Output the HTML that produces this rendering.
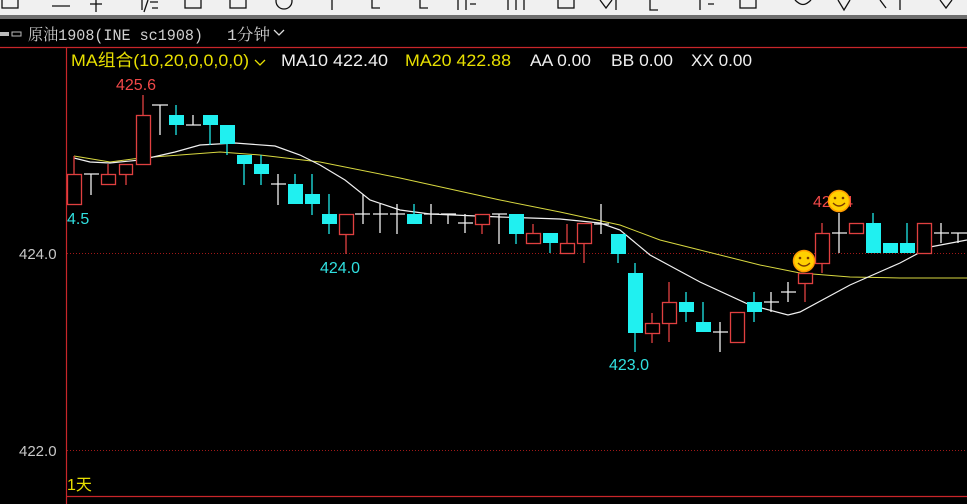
<!DOCTYPE html>
<html><head><meta charset="utf-8"><style>
html,body{margin:0;padding:0;background:#000;width:967px;height:504px;overflow:hidden}
svg{display:block}
.s{font-family:"Liberation Sans","Noto Sans CJK SC",sans-serif}
.t{font-family:"Liberation Mono","Noto Serif CJK SC",serif}
</style></head><body>
<svg width="967" height="504" viewBox="0 0 967 504" xmlns="http://www.w3.org/2000/svg">
<rect width="967" height="504" fill="#000"/>
<rect width="967" height="15" fill="#f0f0f0"/>
<rect y="15" width="967" height="4" fill="#6e6e6e"/>
<g stroke="#111" stroke-width="1.3" fill="none">
<rect x="2" y="-4" width="16" height="12"/><line x1="52" y1="6" x2="70" y2="6"/><line x1="96" y1="0" x2="96" y2="12"/><line x1="90" y1="4" x2="102" y2="4"/>
<path d="M142 0v10M148 0l-4 12M150 2h8M152 8h6"/><rect x="185" y="-4" width="16" height="12"/><rect x="230" y="-4" width="16" height="12"/>
<circle cx="284" cy="1" r="8"/><line x1="332" y1="0" x2="332" y2="10"/><path d="M372 0v8h8M420 0v8h8"/>
<path d="M458 0v10M466 0v10M470 4h6M508 0v10M516 0v10M524 0v10"/><rect x="558" y="-4" width="16" height="12"/>
<path d="M600 0l6 8 6-8M616 0v10M650 0v10h8M700 0v10M708 4h6"/><rect x="740" y="-4" width="16" height="12"/>
<path d="M795 0c6 6 10 6 16 0M838 0l6 10 6-10M880 0l6 8M900 0v10M940 0l6 8 6-8"/>
</g>
<!-- title -->
<g fill="#bbb"><rect x="0" y="32" width="9" height="4"/><rect x="12" y="32" width="9" height="4" fill="none" stroke="#bbb"/></g>
<text class="t" x="28" y="40" fill="#d0d0d0" font-size="16" textLength="175" lengthAdjust="spacingAndGlyphs">原油1908(INE sc1908)</text>
<text class="t" x="227" y="40" fill="#d0d0d0" font-size="16" textLength="43" lengthAdjust="spacingAndGlyphs">1分钟</text>
<path d="M274 30l5 5 5-5" stroke="#ddd" stroke-width="1.3" fill="none"/>
<line x1="0" y1="47.5" x2="967" y2="47.5" stroke="#c8262a" stroke-width="1.2"/>
<line x1="66.5" y1="47" x2="66.5" y2="504" stroke="#c8262a" stroke-width="1.2"/>
<line x1="66" y1="496.5" x2="967" y2="496.5" stroke="#c8262a" stroke-width="1.2"/>
<line x1="67" y1="253.5" x2="967" y2="253.5" stroke="#a01818" stroke-dasharray="1 2"/>
<line x1="67" y1="450.5" x2="967" y2="450.5" stroke="#a01818" stroke-dasharray="1 2"/>
<g class="s" font-size="17">
<text x="71" y="66" fill="#e8e000" textLength="178" lengthAdjust="spacingAndGlyphs">MA组合(10,20,0,0,0,0)</text>
<text x="281" y="66" fill="#f0f0f0" textLength="107" lengthAdjust="spacingAndGlyphs">MA10 422.40</text>
<text x="405" y="66" fill="#e8e000" textLength="106" lengthAdjust="spacingAndGlyphs">MA20 422.88</text>
<text x="530" y="66" fill="#f0f0f0" textLength="61" lengthAdjust="spacingAndGlyphs">AA 0.00</text>
<text x="611" y="66" fill="#f0f0f0" textLength="62" lengthAdjust="spacingAndGlyphs">BB 0.00</text>
<text x="691" y="66" fill="#f0f0f0" textLength="61" lengthAdjust="spacingAndGlyphs">XX 0.00</text>
</g>
<path d="M255 60l5 5 5-5" stroke="#e8e000" stroke-width="1.3" fill="none"/>
<g class="s" font-size="15" fill="#c8c8c8"><text x="19" y="259">424.0</text><text x="19" y="456">422.0</text></g>
<text class="s" x="67" y="490" font-size="16" fill="#e8e000">1天</text>
<!-- MA lines -->
<polyline fill="none" stroke="#d8d840" stroke-width="1" points="74,156 110,162 140,158 180,155 220,152 260,155 320,162 400,178 500,200 560,212 620,225 660,240 700,250 760,265 800,273 850,277 900,278 967,278"/>
<polyline fill="none" stroke="#f0f0f0" stroke-width="1.2" points="74,158 90,162 110,163 140,160 175,152 200,145 235,143 275,146 300,155 320,165 345,180 370,200 400,210 430,214 500,217 560,219 600,223 620,230 650,255 700,282 750,305 788,315 800,312 850,285 900,263 930,247 967,240"/>
<!-- wicks -->
<g stroke-width="1.3">
<g stroke="#e04040">
<line x1="74" y1="156" x2="74" y2="204"/><line x1="108" y1="164" x2="108" y2="184"/><line x1="126" y1="164" x2="126" y2="185"/><line x1="143" y1="95" x2="143" y2="164"/><line x1="346" y1="214" x2="346" y2="254"/><line x1="482" y1="224" x2="482" y2="234"/><line x1="533" y1="224" x2="533" y2="243"/><line x1="567" y1="224" x2="567" y2="253"/><line x1="584" y1="223" x2="584" y2="263"/><line x1="652" y1="313" x2="652" y2="343"/><line x1="669" y1="282" x2="669" y2="342"/><line x1="737" y1="312" x2="737" y2="342"/><line x1="805" y1="273" x2="805" y2="302"/><line x1="822" y1="223" x2="822" y2="273"/><line x1="924" y1="223" x2="924" y2="253"/>
</g>
<g stroke="#20e8e8">
<line x1="176" y1="105" x2="176" y2="135"/><line x1="210" y1="115" x2="210" y2="145"/><line x1="227" y1="125" x2="227" y2="155"/><line x1="244" y1="155" x2="244" y2="185"/><line x1="261" y1="155" x2="261" y2="185"/><line x1="295" y1="174" x2="295" y2="204"/><line x1="312" y1="174" x2="312" y2="215"/><line x1="329" y1="194" x2="329" y2="234"/><line x1="414" y1="204" x2="414" y2="224"/><line x1="516" y1="214" x2="516" y2="244"/><line x1="550" y1="233" x2="550" y2="253"/><line x1="618" y1="234" x2="618" y2="263"/><line x1="635" y1="263" x2="635" y2="352"/><line x1="686" y1="292" x2="686" y2="322"/><line x1="703" y1="302" x2="703" y2="332"/><line x1="754" y1="292" x2="754" y2="322"/><line x1="873" y1="213" x2="873" y2="253"/><line x1="907" y1="223" x2="907" y2="253"/>
</g>
<g stroke="#f0f0f0">
<path d="M84 174h15M91 174v21M152 105h16M160 105v30M186 125h15M193 115v10M271 184h15M278 174v31M355 214h15M363 194v30M373 214h15M380 204v29M390 214h15M397 204v30M424 214h15M431 204v20M441 214h15M448 214v10M458 223h15M465 214v19M492 214h15M499 214v30M594 224h15M601 204v30M713 332h15M720 322v30M764 302h15M771 292v20M781 292h15M788 282v20M832 233h15M839 213v40M934 233h15M941 223v20M951 233h16M958 233v10"/>
</g>
</g>
<!-- bodies -->
<g fill="#000" stroke="#e04040" stroke-width="1.3">
<rect x="67.5" y="174.5" width="14" height="30"/><rect x="101.5" y="174.5" width="14" height="10"/><rect x="119.5" y="164.5" width="13" height="10"/><rect x="136.5" y="115.5" width="14" height="49"/><rect x="339.5" y="214.5" width="14" height="20"/><rect x="475.5" y="214.5" width="14" height="10"/><rect x="526.5" y="233.5" width="14" height="10"/><rect x="560.5" y="243.5" width="14" height="10"/><rect x="577.5" y="223.5" width="14" height="20"/><rect x="645.5" y="323.5" width="14" height="10"/><rect x="662.5" y="302.5" width="14" height="21"/><rect x="730.5" y="312.5" width="14" height="30"/><rect x="798.5" y="273.5" width="14" height="10"/><rect x="815.5" y="233.5" width="14" height="30"/><rect x="849.5" y="223.5" width="14" height="10"/><rect x="917.5" y="223.5" width="14" height="30"/>
</g>
<g fill="#20f0f0">
<rect x="169" y="115" width="15" height="10"/><rect x="203" y="115" width="15" height="10"/><rect x="220" y="125" width="15" height="19"/><rect x="237" y="155" width="15" height="9"/><rect x="254" y="164" width="15" height="10"/><rect x="288" y="184" width="15" height="20"/><rect x="305" y="194" width="15" height="10"/><rect x="322" y="214" width="15" height="10"/><rect x="407" y="214" width="15" height="10"/><rect x="509" y="214" width="15" height="20"/><rect x="543" y="233" width="15" height="10"/><rect x="611" y="234" width="15" height="20"/><rect x="628" y="273" width="15" height="60"/><rect x="679" y="302" width="15" height="10"/><rect x="696" y="322" width="15" height="10"/><rect x="747" y="302" width="15" height="10"/><rect x="866" y="223" width="15" height="30"/><rect x="883" y="243" width="15" height="10"/><rect x="900" y="243" width="15" height="10"/>
</g>
<!-- labels -->
<g class="s" font-size="16">
<text x="116" y="90" fill="#f04848">425.6</text>
<text x="67" y="224" fill="#30e0e0">4.5</text>
<text x="320" y="273" fill="#30e0e0">424.0</text>
<text x="609" y="370" fill="#30e0e0">423.0</text>
<text x="813" y="207" fill="#f04848">425.4</text>
</g>
<!-- smileys -->
<g>
<circle cx="804" cy="261" r="10.5" fill="#ffd000" stroke="#ff9a00" stroke-width="1.5"/>
<circle cx="800" cy="258" r="1.3" fill="#7a3a00"/><circle cx="808" cy="258" r="1.3" fill="#7a3a00"/>
<path d="M798 263q6 6 12 0" stroke="#7a3a00" stroke-width="1.3" fill="none"/>
<circle cx="839" cy="201" r="10.5" fill="#ffd000" stroke="#ff9a00" stroke-width="1.5"/>
<circle cx="835" cy="198" r="1.3" fill="#7a3a00"/><circle cx="843" cy="198" r="1.3" fill="#7a3a00"/>
<path d="M833 203q6 6 12 0" stroke="#7a3a00" stroke-width="1.3" fill="none"/>
</g>
</svg>
</body></html>
